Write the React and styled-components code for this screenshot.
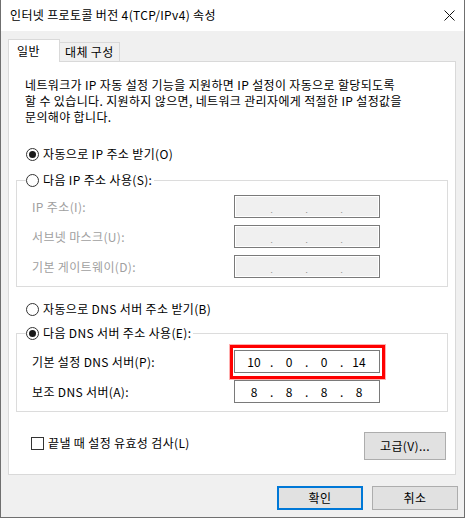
import React from "react"
import styled, { createGlobalStyle, css } from "styled-components"

const GlobalStyle = createGlobalStyle`
  html, body {
    margin: 0;
    padding: 0;
    background: #ffffff;
  }
  body {
    font-family: "Noto Sans CJK KR", "Noto Sans", sans-serif;
    font-size: 12px;
    line-height: 16px;
    letter-spacing: 0.35px;
    color: #000;
  }
`

// window frame
const Window = styled.div`
  width: 465px;
  height: 518px;
  box-sizing: border-box;
  border: 1px solid #6f6f6f;
  border-top: none;
  display: flex;
  flex-direction: column;
  background: #f0f0f0;
`

const TitleBar = styled.div`
  height: 31px;
  background: #ffffff;
  display: flex;
  align-items: center;
  padding: 0 9px 0 9px;
  flex-shrink: 0;
`

const Title = styled.div`
  flex: 1;
  margin-top: -2px;
`

const Body = styled.div`
  flex: 1;
  padding: 8px 6px 0 7px;
  display: flex;
  flex-direction: column;
`

// tabs
const Tabs = styled.div`
  display: flex;
  align-items: flex-end;
  height: 22px;
`

const Tab = styled.div`
  box-sizing: border-box;
  border: 1px solid #d9d9d9;
  border-bottom: none;
  line-height: 18px;
  white-space: nowrap;
  ${(p) =>
    p.$active
      ? css`
          height: 23px;
          margin-bottom: -1px;
          background: #fff;
          padding: 2px 0 0 8px;
          width: 52px;
          position: relative;
          z-index: 1;
        `
      : css`
          height: 19px;
          margin-left: -1px;
          background: #f0f0f0;
          padding: 0 0 0 5px;
          width: 61px;
        `}
`

const Panel = styled.div`
  width: 448px;
  height: 414px;
  box-sizing: border-box;
  background: #fff;
  border: 1px solid #d9d9d9;
  padding: 0 7px;
  display: flex;
  flex-direction: column;
`

const Description = styled.p`
  margin: 15px 0 0 9px;
  white-space: nowrap;
`

// radio + checkbox
const Choice = styled.label`
  display: flex;
  align-items: center;
  gap: 4px;
  height: 16px;
  white-space: nowrap;
`

const RadioDot = styled.span`
  width: 13px;
  height: 13px;
  box-sizing: border-box;
  border: 1px solid #333;
  border-radius: 50%;
  background: #fff;
  display: inline-flex;
  align-items: center;
  justify-content: center;
  flex-shrink: 0;
  &::after {
    content: "";
    width: 7px;
    height: 7px;
    border-radius: 50%;
    background: ${(p) => (p.$checked ? "#1a1a1a" : "transparent")};
  }
`

const Box = styled.span`
  width: 13px;
  height: 13px;
  box-sizing: border-box;
  border: 1px solid #333;
  background: #fff;
  flex-shrink: 0;
`

const RadioLine = styled.div`
  display: flex;
  margin: ${(p) => p.$margin};
  padding-left: 10px;
`

const Radio = ({ checked, children }) => (
  <Choice>
    <RadioDot $checked={checked} />
    {children}
  </Choice>
)

// group box
const Group = styled.fieldset`
  margin: ${(p) => p.$margin};
  padding: 0 15px ${(p) => p.$bottom}px 15px;
  border: 1px solid #dcdcdc;
  min-width: 0;
`

const Legend = styled.legend`
  display: flex;
  padding: 0 2px 0 0;
  margin-left: -6px;
  background: #fff;
`

const Rows = styled.div`
  display: flex;
  flex-direction: column;
  gap: 7px;
  margin-top: ${(p) => p.$top}px;
`

const Row = styled.div`
  display: grid;
  grid-template-columns: 202px 146px;
  align-items: center;
  height: 23px;
`

const RowLabel = styled.span`
  color: ${(p) => (p.$disabled ? "#a0a0a0" : "#000")};
  white-space: nowrap;
`

const FieldWrap = styled.div`
  position: relative;
`

const Highlight = styled.div`
  position: absolute;
  left: -4px;
  top: -5px;
  right: -5px;
  bottom: -6px;
  border: 3px solid #ff0000;
  box-shadow: 0 0 0 1px rgba(255, 80, 80, 0.45);
  pointer-events: none;
`

const IpBox = styled.div`
  box-sizing: border-box;
  width: 146px;
  height: 23px;
  border: 1px solid #7a7a7a;
  display: flex;
  align-items: center;
  padding-left: 3px;
  letter-spacing: 0;
  background: ${(p) => (p.$disabled ? "#f0f0f0" : "#fff")};
  box-shadow: ${(p) => (p.$disabled ? "inset 0 0 0 1px #fff" : "none")};
`

const Seg = styled.span`
  width: 32px;
  text-align: center;
`

const Dot = styled.span`
  width: 3px;
  text-align: center;
  color: ${(p) => (p.$disabled ? "#8a8a8a" : "#000")};
  font-size: ${(p) => (p.$disabled ? "8px" : "12px")};
  margin-top: ${(p) => (p.$disabled ? "6px" : "0")};
`

const IpField = ({ values = ["", "", "", ""], disabled }) => (
  <IpBox $disabled={disabled}>
    {values.map((v, i) => (
      <React.Fragment key={i}>
        <Seg>{v}</Seg>
        {i < 3 && <Dot $disabled={disabled}>.</Dot>}
      </React.Fragment>
    ))}
  </IpBox>
)

// footer + buttons
const Footer = styled.div`
  display: flex;
  justify-content: space-between;
  align-items: flex-start;
  margin-top: 20px;
  padding: 0 2px 0 15px;
`

const CheckLine = styled.div`
  display: flex;
  margin-top: 3px;
`

const Button = styled.button`
  font-family: inherit;
  font-size: 12px;
  letter-spacing: inherit;
  color: #000;
  background: #e1e1e1;
  box-sizing: border-box;
  width: ${(p) => p.$w}px;
  height: ${(p) => p.$h}px;
  border: ${(p) => (p.$primary ? "2px solid #0078d7" : "1px solid #adadad")};
  padding: 0;
  line-height: 16px;
`

const Actions = styled.div`
  display: flex;
  justify-content: flex-end;
  gap: 9px;
  margin-top: 11px;
`

const CloseIcon = () => (
  <svg width="11" height="11" viewBox="0 0 11 11">
    <path d="M0.5 0.5 L10.5 10.5 M10.5 0.5 L0.5 10.5" stroke="#111" strokeWidth="1" fill="none" />
  </svg>
)

export default function App() {
  return (
    <>
      <GlobalStyle />
      <Window>
        <TitleBar>
          <Title>인터넷 프로토콜 버전 4(TCP/IPv4) 속성</Title>
          <CloseIcon />
        </TitleBar>
        <Body>
          <Tabs>
            <Tab $active>일반</Tab>
            <Tab>대체 구성</Tab>
          </Tabs>
          <Panel>
            <Description>
              네트워크가 IP 자동 설정 기능을 지원하면 IP 설정이 자동으로 할당되도록
              <br />
              할 수 있습니다. 지원하지 않으면, 네트워크 관리자에게 적절한 IP 설정값을
              <br />
              문의해야 합니다.
            </Description>

            <RadioLine $margin="21px 0 0 0">
              <Radio checked>자동으로 IP 주소 받기(O)</Radio>
            </RadioLine>

            <Group $margin="10px 0 0 0" $bottom={8}>
              <Legend>
                <Radio>다음 IP 주소 사용(S):</Radio>
              </Legend>
              <Rows $top={7}>
                <Row>
                  <RowLabel $disabled>IP 주소(I):</RowLabel>
                  <IpField disabled />
                </Row>
                <Row>
                  <RowLabel $disabled>서브넷 마스크(U):</RowLabel>
                  <IpField disabled />
                </Row>
                <Row>
                  <RowLabel $disabled>기본 게이트웨이(D):</RowLabel>
                  <IpField disabled />
                </Row>
              </Rows>
            </Group>

            <RadioLine $margin="14px 0 0 0">
              <Radio>자동으로 DNS 서버 주소 받기(B)</Radio>
            </RadioLine>

            <Group $margin="8px 0 0 0" $bottom={8}>
              <Legend>
                <Radio checked>다음 DNS 서버 주소 사용(E):</Radio>
              </Legend>
              <Rows $top={9}>
                <Row>
                  <RowLabel>기본 설정 DNS 서버(P):</RowLabel>
                  <FieldWrap>
                    <IpField values={["10", "0", "0", "14"]} />
                    <Highlight />
                  </FieldWrap>
                </Row>
                <Row>
                  <RowLabel>보조 DNS 서버(A):</RowLabel>
                  <IpField values={["8", "8", "8", "8"]} />
                </Row>
              </Rows>
            </Group>

            <Footer>
              <CheckLine>
                <Choice>
                  <Box />
                  끝낼 때 설정 유효성 검사(L)
                </Choice>
              </CheckLine>
              <Button $w={82} $h={28}>고급(V)...</Button>
            </Footer>
          </Panel>
          <Actions>
            <Button $primary $w={86} $h={24}>확인</Button>
            <Button $w={86} $h={24}>취소</Button>
          </Actions>
        </Body>
      </Window>
    </>
  )
}
